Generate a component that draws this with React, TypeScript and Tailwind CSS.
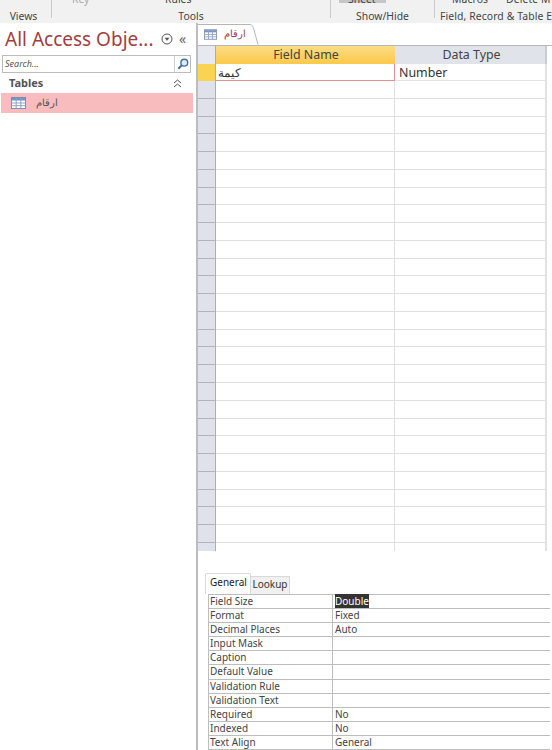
const fontStack = 'font-["Noto_Sans","Open_Sans",sans-serif]';

const properties = [
  ['Field Size', 'Double'],
  ['Format', 'Fixed'],
  ['Decimal Places', 'Auto'],
  ['Input Mask', ''],
  ['Caption', ''],
  ['Default Value', ''],
  ['Validation Rule', ''],
  ['Validation Text', ''],
  ['Required', 'No'],
  ['Indexed', 'No'],
  ['Text Align', 'General'],
];

const emptyRows = Array.from({ length: 26 }, (_, i) => i);

function TableIcon({ className }: { className: string }) {
  return (
    <svg viewBox="0 0 15 12" className={className}>
      <rect x="0.5" y="0.5" width="14" height="11" fill="#fff" stroke="#7f8fa8" />
      <rect x="1" y="1" width="13" height="2.5" fill="#6f94c8" />
      <path d="M0.5 6h14M0.5 8.7h14M5.2 1v10.5M9.8 1v10.5" stroke="#8ea4c4" strokeWidth="1" fill="none" />
    </svg>
  );
}

function RibbonSeparator() {
  return <div className="h-[18px] w-px shrink-0 bg-[#c9c9c9]" />;
}

function Ribbon() {
  return (
    <div className="flex h-[23px] shrink-0 items-start bg-[#f1f1f1] text-[10.4px] leading-[14px] text-[#444]">
      <div className="flex h-full w-[51px] items-end justify-center pr-[4px]">Views</div>
      <RibbonSeparator />
      <div className="relative flex h-full w-[278px] items-end justify-center">
        Tools
        <span className="absolute left-[20px] top-[-8px] text-[#aaa]">Key</span>
        <span className="absolute left-[113px] top-[-8px]">Rules</span>
      </div>
      <RibbonSeparator />
      <div className="relative flex h-full w-[103px] items-end justify-center">
        Show/Hide
        <span className="absolute left-[8px] top-0 h-[3px] w-[47px] bg-[#c6c6c6]" />
        <span className="absolute left-[17px] top-[-8px]">Sheet</span>
      </div>
      <RibbonSeparator />
      <div className="relative flex h-full flex-1 items-end overflow-hidden whitespace-nowrap pl-[5px] tracking-[0.1px]">
        Field, Record &amp; Table Events
        <span className="absolute left-[17px] top-[-8px]">Macros</span>
        <span className="absolute left-[71px] top-[-8px]">Delete M</span>
      </div>
    </div>
  );
}

function NavPane() {
  return (
    <aside className="flex w-[193px] shrink-0 flex-col bg-white">
      <div className="flex h-[32px] items-center pl-[5px]">
        <span className="w-[155px] whitespace-nowrap text-[19px] leading-none text-[#a33d40]">All Access Obje...</span>
        <svg viewBox="0 0 12 12" className="ml-px h-[12px] w-[12px]">
          <circle cx="6" cy="6" r="5" fill="none" stroke="#555" />
          <path d="M3.500 4.800h5L6 7.800z" fill="#555" />
        </svg>
        <span className="ml-[6px] text-[14px] leading-none text-[#666]">«</span>
      </div>
      <div className="mx-[2px] flex h-[18px] w-[189px] items-center border border-[#bdbdbd] bg-white">
        <span className="flex-1 pl-[2px] text-[9px] italic text-[#555]">Search...</span>
        <span className="flex h-full w-[16px] items-center justify-center border-l border-[#d0d0d0]">
          <svg viewBox="0 0 12 12" className="h-[12px] w-[12px]">
            <circle cx="7.300" cy="4.700" r="3.400" fill="#dfeaf6" stroke="#44729f" strokeWidth="1.400" />
            <path d="M4.800 7.200 1.300 10.700" stroke="#44729f" strokeWidth="2" />
          </svg>
        </span>
      </div>
      <div className="flex h-[20px] items-center justify-between pl-[9px] pr-[11px]">
        <span className="text-[11px] font-bold text-[#555]">Tables</span>
        <svg viewBox="0 0 9 9" className="h-[9px] w-[9px]">
          <path d="M1 4 4.500 1 8 4M1 8l3.500-3L8 8" fill="none" stroke="#555" />
        </svg>
      </div>
      <div className="ml-px flex h-[20px] items-center bg-[#f8bcbe] pl-[10px]">
        <TableIcon className="h-[12px] w-[15px]" />
        <span dir="rtl" className="ml-[10px] text-[9.500px] text-[#555]">ارقام</span>
      </div>
    </aside>
  );
}

function DesignGrid() {
  return (
    <div className="flex h-full min-w-0 flex-col border-l-[2px] border-[#bdbdbd] bg-white">
      <div className="flex h-[22px] shrink-0 items-end">
        <div className="flex h-[21px] w-[48px] items-center gap-[7px] border-t border-[#b5b5b5] pb-px pl-[6px]">
          <TableIcon className="h-[11px] w-[15px]" />
          <span dir="rtl" className="text-[9.500px] text-[#9c3b4a]">ارقام</span>
        </div>
        <svg viewBox="0 0 13 21" className="h-[21px] w-[13px]">
          <path d="M0 0.500h3C6 0.500 7 2 8 6L12 20.500" fill="none" stroke="#b5b5b5" />
        </svg>
      </div>
      <div className="flex h-[19px] shrink-0 border-t border-[#b8b8b8] text-[12.400px] leading-[18px] text-[#444]">
        <div className="w-[18px] border-r border-[#a9adb6] bg-[#e6e9ef]" />
        <div className="w-[179px] bg-[linear-gradient(#fbdc85,#fcc94a)] pl-px text-center">Field Name</div>
        <div className="w-[150px] bg-[#e0e3e9] pl-[3px] text-center">Data Type</div>
        <div className="w-[2px] bg-[#c9cbd0]" />
      </div>
      <div className="flex h-[17px] shrink-0 text-[12.400px] leading-[17px] text-[#333]">
        <div className="w-[18px] border-r border-[#a9adb6] bg-[#fbd354]" />
        <div dir="rtl" className="w-[179px] border-b border-r border-[#e58f8f] pr-[153px] text-right">كيمة</div>
        <div className="w-[150px] border-b border-[#e3e3e3] pl-[4px]">Number</div>
        <div className="w-[2px] bg-[#e3e3e3]" />
      </div>
      {emptyRows.map((i) => (
        <div key={i} className="flex h-[17.770px] shrink-0">
          <div className="w-[18px] border-b border-r border-b-[#b0b4bc] border-r-[#a9adb6] bg-[#dfe2ea]" />
          <div className="w-[179px] border-b border-r border-[#e0e0e0]" />
          <div className="w-[150px] border-b border-[#e0e0e0]" />
          <div className="w-[2px] bg-[#e3e3e3]" />
        </div>
      ))}
      <div className="flex h-[8px] shrink-0">
        <div className="w-[18px] border-r border-[#a9adb6] bg-[#dfe2ea]" />
        <div className="w-[179px] border-r border-[#e0e0e0]" />
        <div className="w-[150px]" />
        <div className="w-[2px] bg-[#e3e3e3]" />
      </div>
    </div>
  );
}

function PropertySheet() {
  return (
    <div className="h-[199px] shrink-0 border-l-[2px] border-[#bdbdbd] bg-white pl-[7px] pr-[2px] pt-[22px] text-[10px] text-[#444]">
      <div className="flex h-[21px] items-start">
        <div className="h-[21px] w-[46px] rounded-t-[2px] border-x border-t border-[#d9d9d9] pl-[4px] leading-[16px] text-[#222]">General</div>
        <div className="mt-[3px] h-[18px] w-[39px] border-r border-t border-[#d9d9d9] bg-[#f0f0f0] text-center leading-[15px] text-[#333]">Lookup</div>
      </div>
      <div className="ml-[3px] border-l border-t border-[#bdbdbd]">
        {properties.map(([name, value]) => (
          <div key={name} className="flex h-[14.100px] border-b border-[#bdbdbd] leading-[13px]">
            <div className="w-[124px] border-r border-[#bdbdbd] pl-px">{name}</div>
            <div className="flex-1 pl-[2px]">
              {value === 'Double' ? <span className="bg-[#333] text-white">{value}</span> : value}
            </div>
          </div>
        ))}
      </div>
    </div>
  );
}

export default function App() {
  return (
    <div className={`flex h-[750px] w-[552px] flex-col overflow-hidden bg-white ${fontStack}`}>
      <Ribbon />
      <div className="flex min-h-0 flex-1">
        <NavPane />
        <div className="w-[3px] shrink-0 bg-white" />
        <main className="flex min-w-0 flex-1 flex-col">
          <div className="min-h-0 flex-1 overflow-hidden">
            <DesignGrid />
          </div>
          <PropertySheet />
        </main>
      </div>
    </div>
  );
}
